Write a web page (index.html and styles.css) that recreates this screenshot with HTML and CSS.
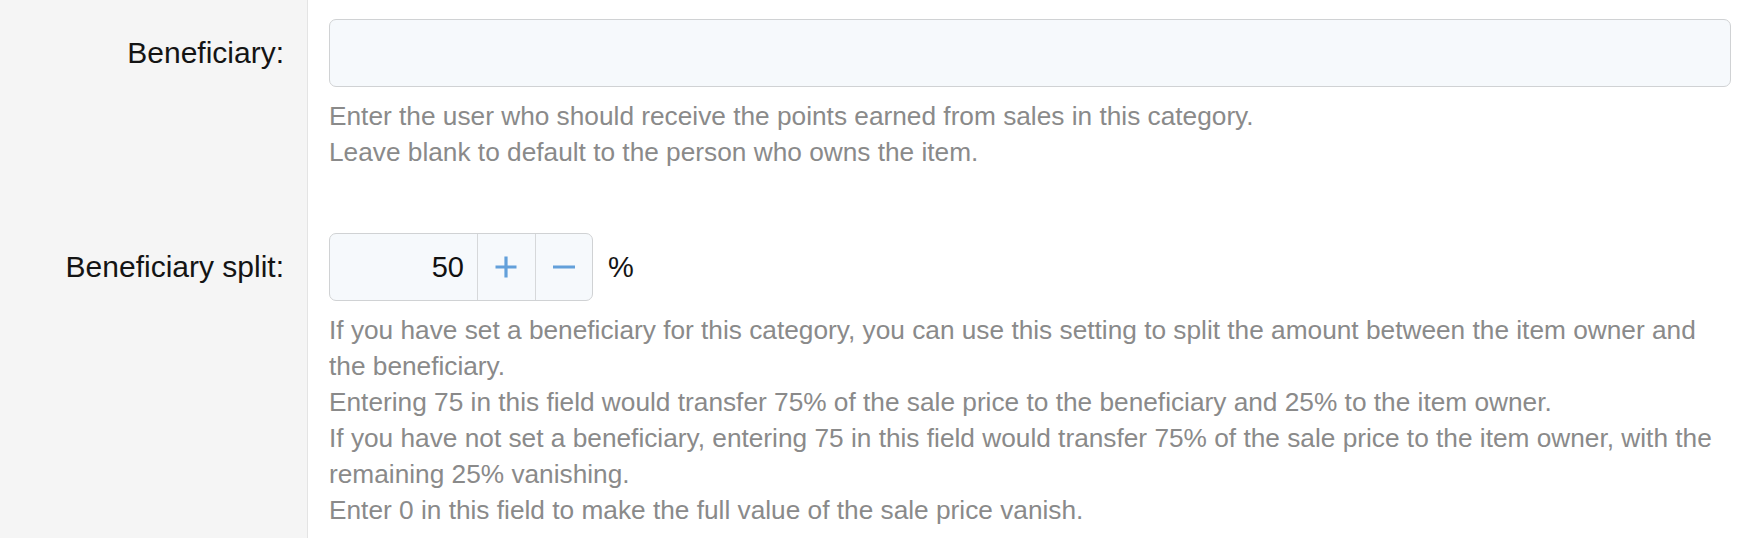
FILE: index.html
```html
<!DOCTYPE html>
<html lang="en">
<head>
<meta charset="utf-8">
<title>Category settings</title>
<link rel="stylesheet" href="styles.css">
</head>
<body>
<div class="form">
  <div class="row row-first">
    <div class="label-cell"><label class="label" for="beneficiary">Beneficiary:</label></div>
    <div class="field-cell">
      <input class="text-input" id="beneficiary" type="text">
      <p class="help">Enter the user who should receive the points earned from sales in this category.<br>Leave blank to default to the person who owns the item.</p>
    </div>
  </div>
  <div class="row row-last">
    <div class="label-cell"><label class="label" for="split">Beneficiary split:</label></div>
    <div class="field-cell">
      <div class="number-line">
        <div class="spinner">
          <input class="spin-value" id="split" type="text" value="50">
          <button class="spin-btn" type="button" aria-label="Increase">
            <svg width="24" height="24" viewBox="0 0 24 24"><path d="M12 1.5V22.5M1.5 12H22.5" stroke="#63a0da" stroke-width="3.2" fill="none"/></svg>
          </button>
          <button class="spin-btn" type="button" aria-label="Decrease">
            <svg width="24" height="24" viewBox="0 0 24 24"><path d="M1 12H23" stroke="#63a0da" stroke-width="3.2" fill="none"/></svg>
          </button>
        </div>
        <span class="unit">%</span>
      </div>
      <p class="help">If you have set a beneficiary for this category, you can use this setting to split the amount between the item owner and the beneficiary.<br>Entering 75 in this field would transfer 75% of the sale price to the beneficiary and 25% to the item owner.<br>If you have not set a beneficiary, entering 75 in this field would transfer 75% of the sale price to the item owner, with the remaining 25% vanishing.<br>Enter 0 in this field to make the full value of the sale price vanish.</p>
    </div>
  </div>
</div>
</body>
</html>
```
FILE: styles.css
```css
* { box-sizing: border-box; }
html, body {
  margin: 0;
  padding: 0;
  background: #ffffff;
  font-family: "Liberation Sans", Arial, Helvetica, sans-serif;
}
.form {
  display: flex;
  flex-direction: column;
  min-height: 100vh;
}
.row {
  display: grid;
  grid-template-columns: 308px 1fr;
}
.row-last { flex: 1; }
.label-cell {
  background: #f5f5f5;
  border-right: 1px solid #e4e4e4;
  padding-right: 23px;
  text-align: right;
}
.row-first .label-cell,
.row-first .field-cell { padding-top: 19px; }
.row-last .label-cell,
.row-last .field-cell { padding-top: 63px; }
.label {
  display: block;
  font-size: 30px;
  line-height: 68px;
  color: #141414;
}
.field-cell {
  padding-left: 21px;
  padding-right: 17px;
}
.text-input {
  display: block;
  width: 100%;
  height: 68px;
  margin: 0;
  border: 1.5px solid #d0d2d4;
  border-radius: 7px;
  background: #f6f9fc;
  font: inherit;
  font-size: 29px;
  padding: 0 14px;
  outline: none;
}
.help {
  margin: 11px 0 0;
  padding-right: 10px;
  font-size: 26.25px;
  line-height: 36px;
  color: #8a8a8a;
}
.number-line {
  display: flex;
  align-items: center;
}
.spinner {
  display: flex;
  width: 264px;
  height: 68px;
  border: 1.5px solid #d0d2d4;
  border-radius: 7px;
  background: #f6f9fc;
  overflow: hidden;
}
.spin-value {
  width: 147px;
  height: 100%;
  border: none;
  background: transparent;
  margin: 0;
  padding: 0 13px 0 0;
  text-align: right;
  font: inherit;
  font-size: 29px;
  color: #111;
  outline: none;
}
.spin-btn {
  width: 58px;
  height: 100%;
  margin: 0;
  padding: 0;
  border: none;
  border-left: 1.5px solid #d6d8da;
  background: transparent;
  display: flex;
  align-items: center;
  justify-content: center;
}
.unit {
  margin-left: 15px;
  font-size: 29px;
  color: #141414;
}
```
